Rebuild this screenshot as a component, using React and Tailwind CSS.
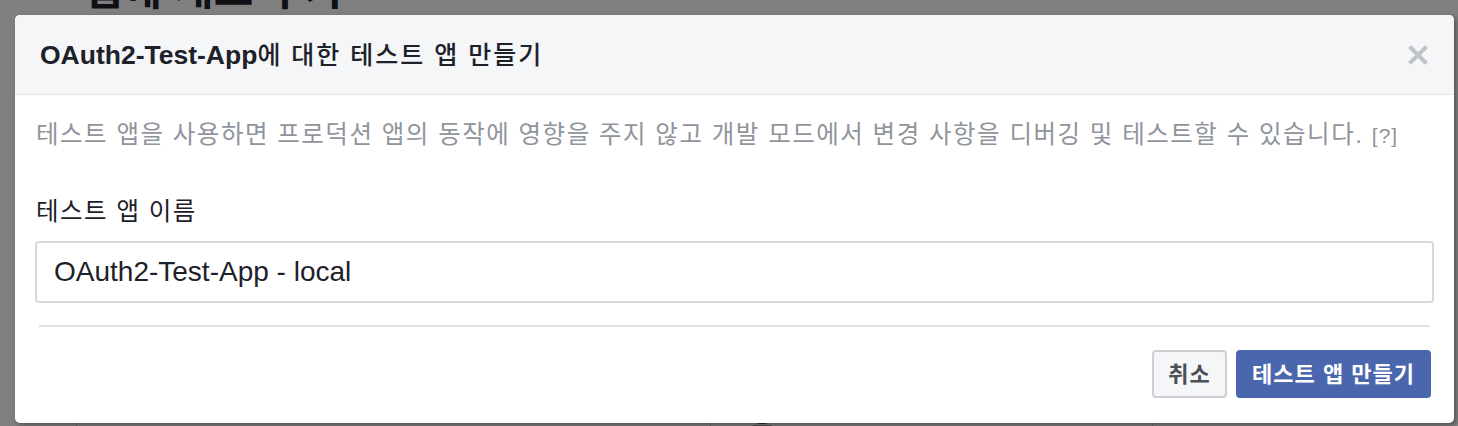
import React from 'react'

const font = "font-['Liberation_Sans','Noto_Sans_CJK_KR',sans-serif]"

function CloseIcon() {
  return (
    <svg width="20" height="20" viewBox="0 0 20 20" className="text-[#bec3c9]">
      <path d="M3 3 L17 17 M17 3 L3 17" stroke="currentColor" strokeWidth="4" strokeLinecap="square" />
    </svg>
  )
}

export default function App() {
  return (
    <div className={`relative h-[426px] w-[1458px] overflow-hidden bg-white ${font}`}>
      {/* page behind the dialog */}
      <div className="flex h-full flex-col justify-between">
        <div className="-mt-[32px] pl-[83px] text-[43px] font-bold leading-[45px] text-[#1d2129]">
          앱에 새로 추가
        </div>
        <div className="-mb-[14px] flex text-[24px] leading-[24px] text-[#4b4f56]">
          <div className="ml-[76px] w-[634px] border-l border-[#ccd0d5] pl-[34px]">앱의 기본 설정 및 제품을 구성하려면 이 섹션을</div>
          <div className="w-[442px] border-l border-[#ccd0d5] pl-[40px]">개발자 계정을 사용하여 앱 설정과 기능을</div>
          <div className="flex-1 border-l border-[#ccd0d5]" />
        </div>
      </div>

      <div className="absolute inset-0 bg-black/50" />

      {/* dialog */}
      <div className="absolute inset-0 pl-[15px] pt-[15px]">
        <div className="flex h-[408px] w-[1439px] flex-col rounded-[5px] bg-white shadow-[2px_2px_4px_rgba(0,0,0,0.35)]">
          <div className="flex h-[80px] items-center justify-between rounded-t-[5px] border-b border-[#e5e5e5] bg-[#f5f6f7] pl-[25px] pr-[26px]">
            <h2 className="text-[26.5px] font-bold leading-[30px] text-[#1d2129]">
              OAuth2-Test-App
              <span className="text-[25px] font-medium tracking-[2px]">에 대한 테스트 앱 만들기</span>
            </h2>
            <CloseIcon />
          </div>

          <div className="flex flex-1 flex-col px-[20px] pt-[25px]">
            <p className="pl-[1px] text-[24.5px] leading-[30px] tracking-[1.5px] text-[#90949c]">
              테스트 앱을 사용하면 프로덕션 앱의 동작에 영향을 주지 않고 개발 모드에서 변경 사항을 디버깅 및 테스트할 수 있습니다.{' '}
              <span className="text-[21px] tracking-[1px]">[?]</span>
            </p>
            <label className="mt-[46px] pl-[1px] text-[24.5px] leading-[30px] tracking-[1.5px] text-[#1d2129]">
              테스트 앱 이름
            </label>
            <div className="mt-[14px] flex h-[62px] items-center rounded-[4px] border-2 border-[#d6d8dc] pl-[17px] text-[28px] text-[#1d2129]">
              OAuth2-Test-App - local
            </div>
            <div className="mx-[4px] mt-[22px] h-[2px] bg-[#dddfe2]" />
            <div className="mr-[3px] mt-[23px] flex justify-end gap-[9px]">
              <button className="h-[48px] w-[75px] rounded-[4px] border-2 border-[#ccd0d5] bg-[#f5f6f7] text-[22px] font-bold tracking-[1px] text-[#4b4f56]">
                취소
              </button>
              <button className="h-[48px] w-[195px] rounded-[4px] bg-[#4a67ad] text-[22px] font-bold tracking-[1px] text-white">
                테스트 앱 만들기
              </button>
            </div>
          </div>
        </div>
      </div>
    </div>
  )
}
